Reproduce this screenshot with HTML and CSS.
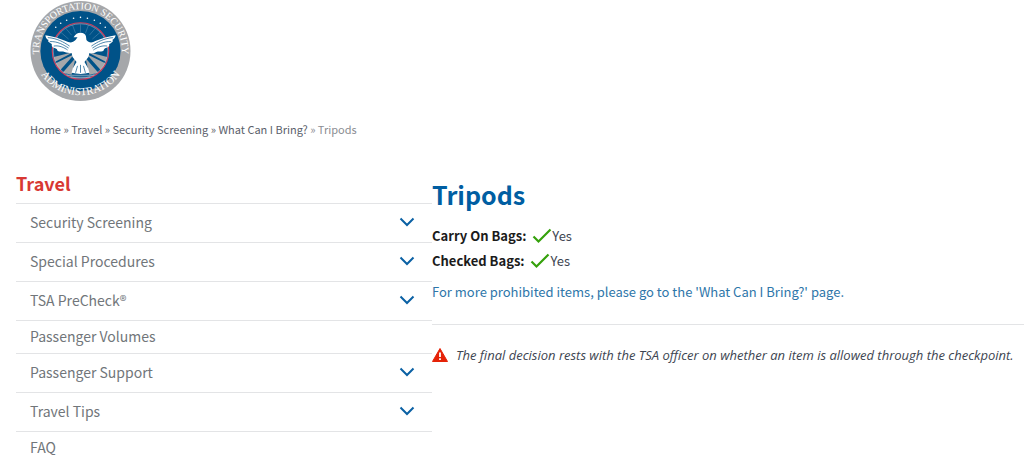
FILE: index.html
```
<!DOCTYPE html>
<html lang="en">
<head>
    <meta charset="UTF-8">
    <meta name="viewport" content="width=device-width, initial-scale=1.0">
    <title>Tripods | Transportation Security Administration</title>
    <link rel="stylesheet" href="styles.css">
</head>
<body>

    <svg class="symbols" aria-hidden="true">
        <symbol id="chevron" viewBox="0 0 16 10">
            <path d="M1.5 1.5 L8 8 L14.5 1.5" fill="none" stroke="#0b61a4" stroke-width="2"/>
        </symbol>
        <symbol id="check" viewBox="0 0 20 16">
            <path d="M1.5 8.5 L6.5 13.5 L18.5 1.5" fill="none" stroke="#35a10c" stroke-width="2.2"/>
        </symbol>
    </svg>

    <header class="header">
        <a class="logo" href="#" aria-label="Transportation Security Administration">
            <svg viewBox="0 0 102 102">
                <defs>
                    <path id="arc-top" d="M14 70 A41.8 41.8 0 1 1 88 70"/>
                    <path id="arc-bottom" d="M4 60 A48.8 48.8 0 0 0 98 60"/>
                </defs>
                <circle cx="51" cy="51" r="50.5" fill="#a5a7aa"/>
                <circle cx="51" cy="51" r="40.5" fill="#005288"/>
                <text class="seal-text"><textPath href="#arc-top" startOffset="50%">TRANSPORTATION SECURITY</textPath></text>
                <text class="seal-text seal-text-bottom"><textPath href="#arc-bottom" startOffset="50%">ADMINISTRATION</textPath></text>
                <!-- roads below the eagle -->
                <g fill="#a5a7aa">
                    <path d="M44 52 L24 57 L25 62 Z"/>
                    <path d="M58 52 L78 57 L77 62 Z"/>
                    <path d="M45 54 L25 64 L30 71 Z"/>
                    <path d="M57 54 L77 64 L72 71 Z"/>
                    <path d="M46 58 L33 73 L42 75 Z"/>
                    <path d="M56 58 L69 73 L60 75 Z"/>
                </g>
                <!-- rays -->
                <path d="M51 32 V24 M46 33 L43 25 M56 33 L59 25 M42 35 L36 28 M60 35 L66 28 M39 39 L31 32 M63 39 L71 32" stroke="#5087ae" stroke-width="0.6"/>
                <circle cx="51" cy="51" r="28.5" fill="none" stroke="#d23d5b" stroke-width="1.2"/>
                <circle cx="51" cy="51" r="27.5" fill="none" stroke="#b9c6d3" stroke-width="0.5"/>
                <g fill="#fff">
                    <circle cx="26" cy="27" r="0.8"/>
                    <circle cx="31" cy="23" r="0.8"/>
                    <circle cx="37" cy="20" r="0.8"/>
                    <circle cx="44" cy="18" r="0.8"/>
                    <circle cx="51" cy="17" r="0.8"/>
                    <circle cx="58" cy="18" r="0.8"/>
                    <circle cx="65" cy="20" r="0.8"/>
                    <circle cx="71" cy="23" r="0.8"/>
                    <circle cx="76" cy="27" r="0.8"/>
                </g>
                <!-- eagle -->
                <path fill="#fff" d="M44 37 C46 34 48 32.5 51 32.5 C54 32.5 56 34 56.5 36 L57 40 C59 43 63 43 66 41 C72 38 80 36 86.5 35 C86 38 84 39 83 40 L84 41 C82 43 81 44 80 44 L80 46 C78 48 76 48 75 49 L74 51 C71 52 69 51 67 52 C64 54 62 53 60 53 L59 57 L55 62 L59 69 L60 73 C54 74.5 48 74.5 42 73 L43 69 L47 62 L43 57 L42 53 C39 53 37 53 35 52 C33 51 30 52 28 51 L27 49 C25 48 23 48 22 46 L22 44 C20 43 19 42 18 41 L19 40 C17 39 16 38 15.5 35 C23 36 30 38 36 41 C40 43 43 43 46 40 L48 37 Z"/>
                <g fill="none" stroke="#005288" stroke-width="0.7">
                    <path d="M18 37.5 C27 38 34 42 40 46 M20 41.5 C28 41 34 45 39 48 M24 46 C30 45 35 48 38 50"/>
                    <path d="M84 37.5 C75 38 68 42 62 46 M82 41.5 C74 41 68 45 63 48 M78 46 C72 45 67 48 64 50"/>
                    <path d="M48 66 L46 73 M51 65 V73 M54 66 L56 73"/>
                </g>
                <path d="M37 75.5 H65 M41 77.5 H61" stroke="#a9bdcc" stroke-width="0.8"/>
            </svg>
        </a>
        <nav class="breadcrumb" aria-label="Breadcrumb">
            <a href="#">Home</a> » <a href="#">Travel</a> » <a href="#">Security Screening</a> » <a href="#">What Can I Bring?</a> <span class="current">» Tripods</span>
        </nav>
    </header>

    <div class="content">
        <aside class="sidebar">
            <h2>Travel</h2>
            <ul class="menu">
                <li class="has-children">
                    <a href="#">Security Screening</a>
                    <button type="button" aria-label="Expand Security Screening"><svg><use href="#chevron"/></svg></button>
                </li>
                <li class="has-children">
                    <a href="#">Special Procedures</a>
                    <button type="button" aria-label="Expand Special Procedures"><svg><use href="#chevron"/></svg></button>
                </li>
                <li class="has-children">
                    <a href="#">TSA PreCheck®</a>
                    <button type="button" aria-label="Expand TSA PreCheck"><svg><use href="#chevron"/></svg></button>
                </li>
                <li><a href="#">Passenger Volumes</a></li>
                <li class="has-children">
                    <a href="#">Passenger Support</a>
                    <button type="button" aria-label="Expand Passenger Support"><svg><use href="#chevron"/></svg></button>
                </li>
                <li class="has-children">
                    <a href="#">Travel Tips</a>
                    <button type="button" aria-label="Expand Travel Tips"><svg><use href="#chevron"/></svg></button>
                </li>
                <li><a href="#">FAQ</a></li>
            </ul>
        </aside>

        <main class="main">
            <h1>Tripods</h1>
            <div class="rule"><strong>Carry On Bags:</strong> <svg class="check"><use href="#check"/></svg>Yes</div>
            <div class="rule"><strong>Checked Bags:</strong> <svg class="check"><use href="#check"/></svg>Yes</div>
            <p class="more"><a href="#">For more prohibited items, please go to the 'What Can I Bring?' page.</a></p>
            <p class="notice">
                <svg class="warning" viewBox="0 0 16 14" aria-hidden="true">
                    <path d="M8 0.5 L15.5 13.5 H0.5 Z" fill="#e52207" stroke="#e52207" stroke-linejoin="round"/>
                    <path d="M8 4.5 V9 M8 10.3 V12" stroke="#fff" stroke-width="1.8"/>
                </svg>
                <em>The final decision rests with the TSA officer on whether an item is allowed through the checkpoint.</em>
            </p>
        </main>
    </div>

</body>
</html>
```
FILE: styles.css
```
body {
    font-family: "Source Sans Pro", "Noto Sans CJK SC", sans-serif;
    font-size: 13px;
    line-height: 24px;
    background-color: #fff;
    color: #3d4551;
    margin: 0;
}
a {
    color: inherit;
    text-decoration: none;
}
a:hover {
    text-decoration: underline;
}
.symbols {
    display: none;
}
.header {
    padding: 0 30px;
}
.logo,
.logo svg {
    display: block;
    width: 101px;
    height: 102px;
}
.seal-text {
    font-family: "Liberation Serif", serif;
    font-size: 10px;
    fill: #fff;
    text-anchor: middle;
}
.seal-text-bottom {
    font-size: 11px;
}
.breadcrumb {
    font-size: 11px;
    margin-top: 15px;
    color: #5b616b;
}
.breadcrumb .current {
    color: #8a8d92;
}
.content {
    display: flex;
    padding-left: 16px;
    margin-top: 28px;
}
/* sidebar menu */
.sidebar {
    flex: 0 0 416px;
}
.sidebar h2 {
    margin: 0;
    padding-bottom: 6px;
    font-size: 18px;
    line-height: 28px;
    color: #d83933;
}
.menu {
    list-style: none;
    margin: 0;
    padding: 0;
    font-size: 14px;
    color: #71767a;
}
.menu li {
    display: flex;
    align-items: center;
    justify-content: space-between;
    height: 30px;
    padding: 0 17px 2px 14px;
    border-top: 1px solid #e3e4e6;
}
.menu .has-children {
    height: 36px;
}
.menu button {
    display: flex;
    padding: 0;
    border: 0;
    background: none;
    cursor: pointer;
}
.menu button svg {
    width: 16px;
    height: 10px;
}
/* item details */
.main {
    flex: 1;
    min-width: 0;
}
.main h1 {
    margin: 9px 0 13px;
    font-size: 25px;
    line-height: 32px;
    color: #005ea2;
}
.rule {
    line-height: 25px;
}
.rule strong {
    color: #1b1b1b;
    margin-right: 3px;
}
.check {
    width: 20px;
    height: 16px;
    vertical-align: -3px;
}
.more {
    margin: 7px 0 0;
    padding-bottom: 20px;
    border-bottom: 1px solid #e3e4e6;
    color: #2e76a9;
}
.notice {
    display: flex;
    align-items: center;
    gap: 8px;
    margin: 18px 0 0;
    font-family: "Open Sans", sans-serif;
}
.warning {
    flex: none;
    width: 16px;
    height: 14px;
}
```
